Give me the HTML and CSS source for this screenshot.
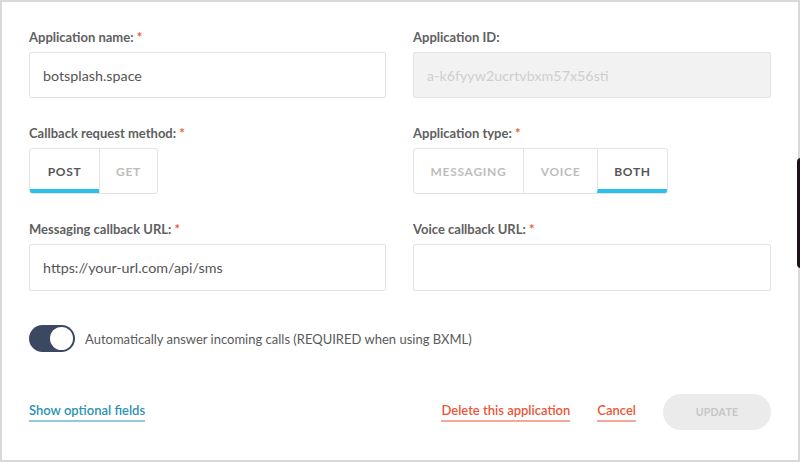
FILE: index.html
```html
<!DOCTYPE html>
<html>
<head>
<meta charset="utf-8">
<link rel="stylesheet" href="styles.css">
</head>
<body>
<div class="panel">
  <div class="grid">
    <div class="field">
      <label class="label">Application name: <span class="req">*</span></label>
      <div class="input">botsplash.space</div>
    </div>
    <div class="field">
      <label class="label">Application ID:</label>
      <div class="input disabled">a-k6fyyw2ucrtvbxm57x56sti</div>
    </div>
    <div class="field">
      <label class="label">Callback request method: <span class="req">*</span></label>
      <div class="seg">
        <div class="opt active w-post">POST</div>
        <div class="opt w-get">GET</div>
      </div>
    </div>
    <div class="field">
      <label class="label">Application type: <span class="req">*</span></label>
      <div class="seg">
        <div class="opt w-msg">MESSAGING</div>
        <div class="opt w-voice">VOICE</div>
        <div class="opt active w-both">BOTH</div>
      </div>
    </div>
    <div class="field">
      <label class="label">Messaging callback URL: <span class="req">*</span></label>
      <div class="input tall">https://your-url.com/api/sms</div>
    </div>
    <div class="field">
      <label class="label">Voice callback URL: <span class="req">*</span></label>
      <div class="input tall"></div>
    </div>
  </div>
  <div class="toggle-row">
    <div class="toggle"><div class="knob"></div></div>
    <span class="toggle-text">Automatically answer incoming calls (REQUIRED when using BXML)</span>
  </div>
  <div class="footer">
    <a class="link blue">Show optional fields</a>
    <div class="actions">
      <a class="link red">Delete this application</a>
      <a class="link red">Cancel</a>
      <button class="btn">UPDATE</button>
    </div>
  </div>
</div>
<div class="side-tab"></div>
</body>
</html>
```
FILE: styles.css
```css
html, body {
  margin: 0;
  padding: 0;
  background: #fff;
}
body {
  font-family: "Lato", "Open Sans", sans-serif;
  color: #555;
  width: 800px;
  height: 463px;
  overflow: hidden;
  position: relative;
}
.panel {
  box-sizing: border-box;
  width: 800px;
  height: 462px;
  border: 2px solid #d9d9d9;
  padding: 27px 27px 0 27px;
}
.grid {
  display: grid;
  grid-template-columns: 357px 358px;
  column-gap: 27px;
  row-gap: 27px;
}
.field {
  display: flex;
  flex-direction: column;
}
.label {
  font-size: 13px;
  font-weight: 700;
  color: #606060;
  line-height: 16px;
  margin-bottom: 7px;
}
.req {
  color: #ee5a3c;
}
.input {
  box-sizing: border-box;
  height: 46px;
  border: 1px solid #e3e3e3;
  border-radius: 2px;
  padding: 0 13px;
  display: flex;
  align-items: center;
  font-size: 14.3px;
  color: #555;
}
.input.tall {
  height: 47px;
}
.input.disabled {
  background: #f2f2f2;
  color: #cfcfcf;
}
.seg {
  display: flex;
  height: 46px;
  box-sizing: border-box;
  border: 1px solid #e3e3e3;
  border-radius: 3px;
  align-self: flex-start;
  overflow: hidden;
}
.opt {
  box-sizing: border-box;
  display: flex;
  align-items: center;
  justify-content: center;
  font-size: 12px;
  font-weight: 700;
  letter-spacing: 0.7px;
  color: #bdbdbd;
  border-left: 1px solid #e3e3e3;
}
.opt:first-child {
  border-left: none;
}
.opt.active {
  color: #555;
  border-bottom: 4px solid #29c1ec;
  padding-top: 4px;
}
.w-post { width: 69px; }
.w-get { width: 58px; }
.w-msg { width: 109px; }
.w-voice { width: 74px; }
.w-both { width: 70px; }
.toggle-row {
  display: flex;
  align-items: center;
  margin-top: 34px;
  gap: 10px;
}
.toggle {
  width: 46px;
  height: 27px;
  border-radius: 14px;
  background: #3c4862;
  position: relative;
}
.knob {
  position: absolute;
  right: 2px;
  top: 2px;
  width: 23px;
  height: 23px;
  border-radius: 50%;
  background: #fff;
}
.toggle-text {
  font-size: 13px;
  color: #5a5a5a;
}
.footer {
  display: flex;
  justify-content: space-between;
  align-items: center;
  margin-top: 42px;
}
.actions {
  display: flex;
  align-items: center;
}
.link {
  font-size: 13px;
  font-weight: 600;
  line-height: 16px;
  padding-bottom: 2px;
  border-bottom: 2px solid;
  cursor: pointer;
}
.link.blue {
  color: #2b92b4;
  border-bottom-color: #8fcbdc;
}
.link.red {
  color: #ec5537;
  border-bottom-color: #f4a898;
  margin-right: 27px;
}
.btn {
  width: 108px;
  height: 36px;
  border: none;
  border-radius: 18px;
  background: #ebebeb;
  color: #c6c6c6;
  font-family: inherit;
  font-size: 10.5px;
  font-weight: 700;
  letter-spacing: 0.3px;
}
.side-tab {
  position: absolute;
  left: 797px;
  top: 158px;
  width: 6px;
  height: 110px;
  background: #1b1119;
  border-radius: 4px 0 0 4px;
}
```
